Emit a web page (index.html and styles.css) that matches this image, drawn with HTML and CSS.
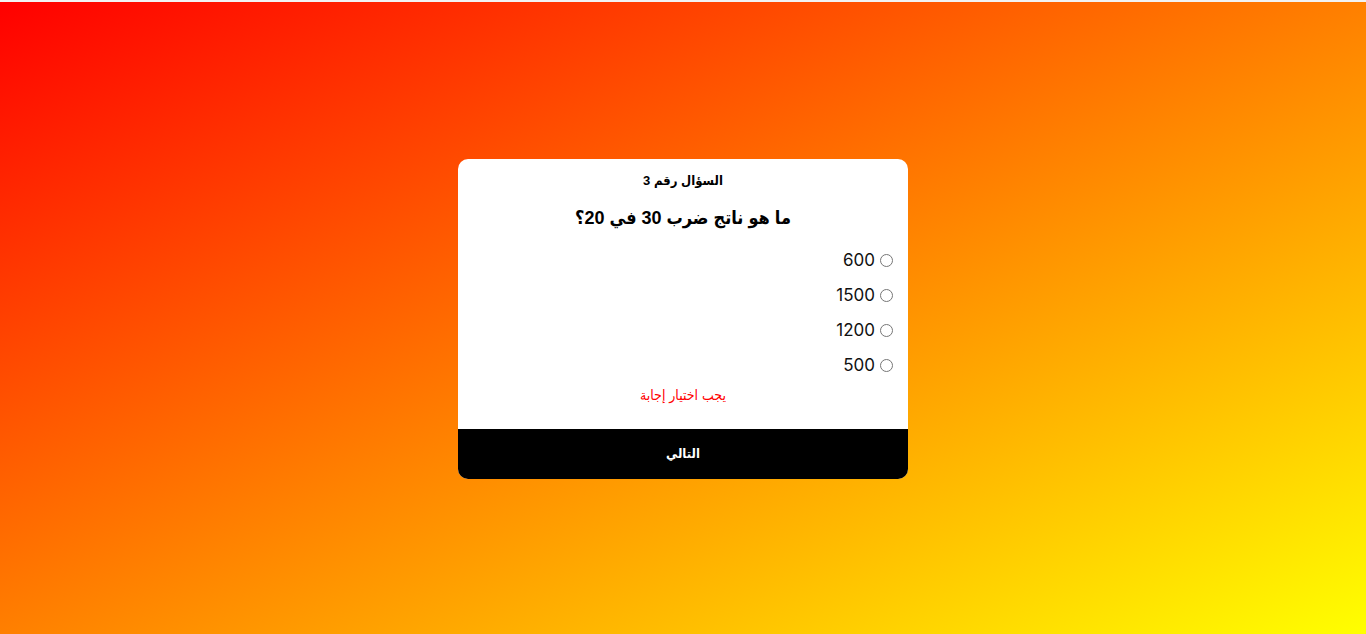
FILE: index.html
```html
<!DOCTYPE html>
<html lang="ar" dir="rtl">
<head>
<meta charset="utf-8">
<title>اختبار</title>
<link rel="stylesheet" href="styles.css">
</head>
<body>
<div class="page">
  <div class="quiz">
    <div class="quiz-body">
      <div class="count">السؤال رقم 3</div>
      <h2 class="question">ما هو ناتج ضرب 30 في 20؟</h2>
      <ul class="answers">
        <li class="answer"><input type="radio" name="a" id="a1"><label for="a1">600</label></li>
        <li class="answer"><input type="radio" name="a" id="a2"><label for="a2">1500</label></li>
        <li class="answer"><input type="radio" name="a" id="a3"><label for="a3">1200</label></li>
        <li class="answer"><input type="radio" name="a" id="a4"><label for="a4">500</label></li>
      </ul>
      <div class="error">يجب اختيار إجابة</div>
    </div>
    <button class="next">التالي</button>
  </div>
</div>
</body>
</html>
```
FILE: styles.css
```css
* { box-sizing: border-box; }
html, body { margin: 0; padding: 0; height: 100%; }
body {
  font-family: "Liberation Sans", "DejaVu Sans Condensed", "DejaVu Sans", sans-serif;
  border-top: 2px solid #f2f2f2;
}
.page {
  height: 632px;
  background: linear-gradient(to bottom right, #ff0000, #ffff00);
  display: flex;
  align-items: center;
  justify-content: center;
}
.quiz {
  width: 450px;
  height: 320px;
  background: #fff;
  border-radius: 10px;
  overflow: hidden;
  display: flex;
  flex-direction: column;
  margin-top: 1px;
}
.quiz-body {
  flex: 1;
  padding: 12px 15px 0 15px;
}
.count {
  text-align: center;
  font-size: 13px;
  font-weight: bold;
  line-height: 20px;
}
.question {
  text-align: center;
  font-size: 18px;
  font-weight: bold;
  margin: 16px 0 14px;
  line-height: 22px;
}
.answers {
  list-style: none;
  margin: 0;
  padding: 0;
}
.answer {
  display: flex;
  align-items: center;
  height: 35px;
}
.answer input {
  margin: 0 0 0 5px;
  width: 13px;
  height: 13px;
}
.answer label {
  font-family: "Inter", sans-serif;
  font-size: 17px;
  color: #111;
}
.error {
  text-align: center;
  color: #ff0000;
  font-size: 14px;
  margin-top: 4px;
}
.next {
  height: 50px;
  border: 0;
  background: #000;
  color: #fff;
  font-family: "Liberation Sans", "DejaVu Sans Condensed", "DejaVu Sans", sans-serif;
  font-size: 13px;
  font-weight: bold;
}
```
